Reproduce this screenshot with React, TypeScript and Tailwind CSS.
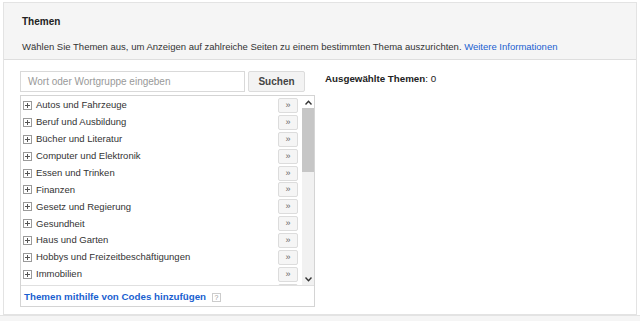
import React from "react";

const topics = [
  "Autos und Fahrzeuge",
  "Beruf und Ausbildung",
  "Bücher und Literatur",
  "Computer und Elektronik",
  "Essen und Trinken",
  "Finanzen",
  "Gesetz und Regierung",
  "Gesundheit",
  "Haus und Garten",
  "Hobbys und Freizeitbeschäftigungen",
  "Immobilien",
  "Internet und Telekommunikation",
];

function PlusBox() {
  return (
    <span className="w-[9px] h-[9px] border border-[#9a9a9a] bg-white flex items-center justify-center shrink-0 relative">
      <span className="absolute w-[5px] h-px bg-[#555]" />
      <span className="absolute h-[5px] w-px bg-[#555]" />
    </span>
  );
}

export default function App() {
  return (
    <div className="w-[640px] h-[321px] bg-white overflow-hidden" style={{ fontFamily: '"Liberation Sans", Arial, sans-serif' }}>
      <div className="ml-[3px] mt-[2px] w-[634px] h-[313px] border border-[#e3e3e3] flex flex-col">
        <div className="h-[57px] bg-[#f5f5f5] border-b border-[#dedede] pl-[18px] pt-[13px] shrink-0">
          <div className="text-[10px] font-bold text-[#222] leading-[12px]">Themen</div>
          <div className="text-[9.5px] text-[#333] leading-[12px] mt-[13px]">
            Wählen Sie Themen aus, um Anzeigen auf zahlreiche Seiten zu einem bestimmten Thema auszurichten.{" "}
            <span className="text-[#1a5fd0]">Weitere Informationen</span>
          </div>
        </div>
        <div className="flex pl-[16px] pt-[11px]">
          <div className="w-[295px] flex flex-col">
            <div className="flex gap-[3px] h-[21px]">
              <div className="w-[225px] h-[21px] border border-[#d9d9d9] bg-white flex items-center pl-[7px] text-[10px] text-[#999]">
                Wort oder Wortgruppe eingeben
              </div>
              <div className="w-[57px] h-[21px] border border-[#dcdcdc] bg-[#f3f3f3] rounded-[2px] flex items-center justify-center text-[10px] font-bold text-[#444]">
                Suchen
              </div>
            </div>
            <div className="mt-[3px] w-[295px] h-[212px] border border-[#d4d4d4] flex flex-col">
              <div className="h-[190px] flex border-b border-[#e0e0e0] overflow-hidden">
                <div className="flex-1 overflow-hidden h-[189px] pt-px">
                  {topics.map((t) => (
                    <div key={t} className="h-[16.9px] flex items-center pl-[2px] pr-[4px]">
                      <PlusBox />
                      <span className="ml-[4px] text-[9.5px] text-[#333] flex-1 whitespace-nowrap">{t}</span>
                      <span className="w-[20px] h-[15px] border border-[#dcdcdc] bg-[#f5f5f5] rounded-[2px] flex items-center justify-center text-[9px] text-[#666] leading-none">»</span>
                    </div>
                  ))}
                </div>
                <div className="w-[12px] bg-[#f1f1f1] flex flex-col items-center">
                  <div className="h-[12px] w-full flex items-center justify-center bg-white">
                    <svg width="7" height="5" viewBox="0 0 7 5"><path d="M0.5 4.5 L3.5 1.2 L6.5 4.5" stroke="#333" strokeWidth="1.4" fill="none" /></svg>
                  </div>
                  <div className="w-full h-[64px] bg-[#c6c6c6]" />
                  <div className="flex-1" />
                  <div className="h-[12px] w-full flex items-center justify-center">
                    <svg width="7" height="5" viewBox="0 0 7 5"><path d="M0.5 0.5 L3.5 3.8 L6.5 0.5" stroke="#333" strokeWidth="1.4" fill="none" /></svg>
                  </div>
                </div>
              </div>
              <div className="flex-1 flex items-center pl-[3px] pt-[2px]">
                <span className="text-[9.75px] font-bold text-[#1a5fd0]">Themen mithilfe von Codes hinzufügen</span>
                <span className="ml-[6px] w-[9px] h-[9px] border border-[#ccc] text-[7px] text-[#999] flex items-center justify-center leading-none">?</span>
              </div>
            </div>
          </div>
          <div className="ml-[10px] pt-[1px] text-[9.75px] text-[#222]">
            <span className="font-bold">Ausgewählte Themen</span>: 0
          </div>
        </div>
      </div>
      <div className="h-[6px] bg-[#f5f5f5] border-t border-[#e3e3e3]" />
    </div>
  );
}
